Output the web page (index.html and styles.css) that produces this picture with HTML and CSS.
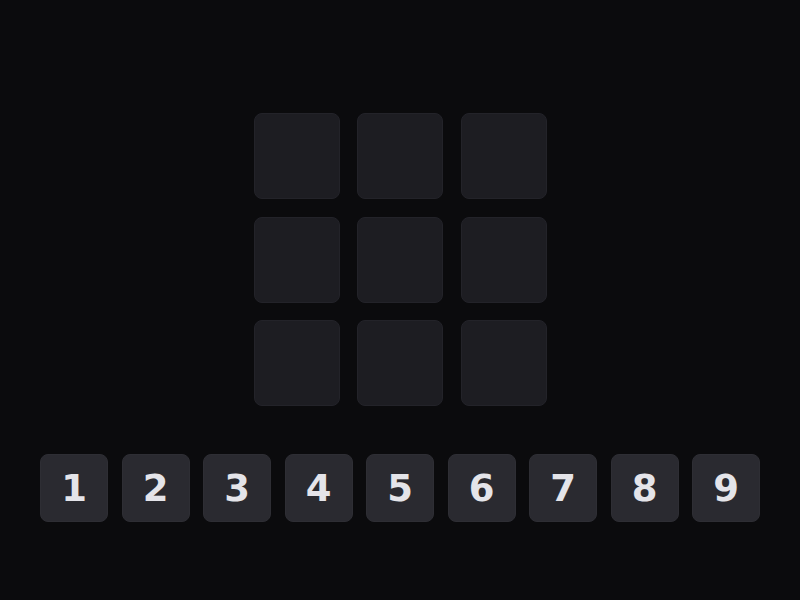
FILE: index.html
```html
<!DOCTYPE html>
<html>
<head>
<meta charset="utf-8">
<link rel="stylesheet" href="styles.css">
</head>
<body>
<main class="app">
  <div class="board">
    <div class="cell"></div><div class="cell"></div><div class="cell"></div>
    <div class="cell"></div><div class="cell"></div><div class="cell"></div>
    <div class="cell"></div><div class="cell"></div><div class="cell"></div>
  </div>
  <div class="pad">
    <button class="key">1</button>
    <button class="key">2</button>
    <button class="key">3</button>
    <button class="key">4</button>
    <button class="key">5</button>
    <button class="key">6</button>
    <button class="key">7</button>
    <button class="key">8</button>
    <button class="key">9</button>
  </div>
</main>
</body>
</html>
```

FILE: styles.css
```css
html, body {
  margin: 0;
  padding: 0;
  background: #0b0b0d;
  width: 800px;
  height: 600px;
  overflow: hidden;
}
.app {
  display: flex;
  flex-direction: column;
  align-items: center;
  padding-top: 113px;
  gap: 48px;
}
.board {
  display: grid;
  grid-template-columns: repeat(3, 86px);
  grid-auto-rows: 86px;
  gap: 17.5px;
}
.cell {
  background: #1d1d22;
  border: 1px solid #232329;
  border-radius: 8px;
  box-sizing: border-box;
}
.pad {
  display: flex;
  gap: 13.5px;
}
.key {
  width: 68px;
  height: 68px;
  margin: 0;
  padding: 0;
  border: 1px solid #2e2e34;
  border-radius: 8px;
  background: #2a2a30;
  color: #e4e4e9;
  font-family: "DejaVu Sans", sans-serif;
  font-weight: bold;
  font-size: 37px;
  line-height: 1;
  display: flex;
  align-items: center;
  justify-content: center;
  box-sizing: border-box;
}
```
